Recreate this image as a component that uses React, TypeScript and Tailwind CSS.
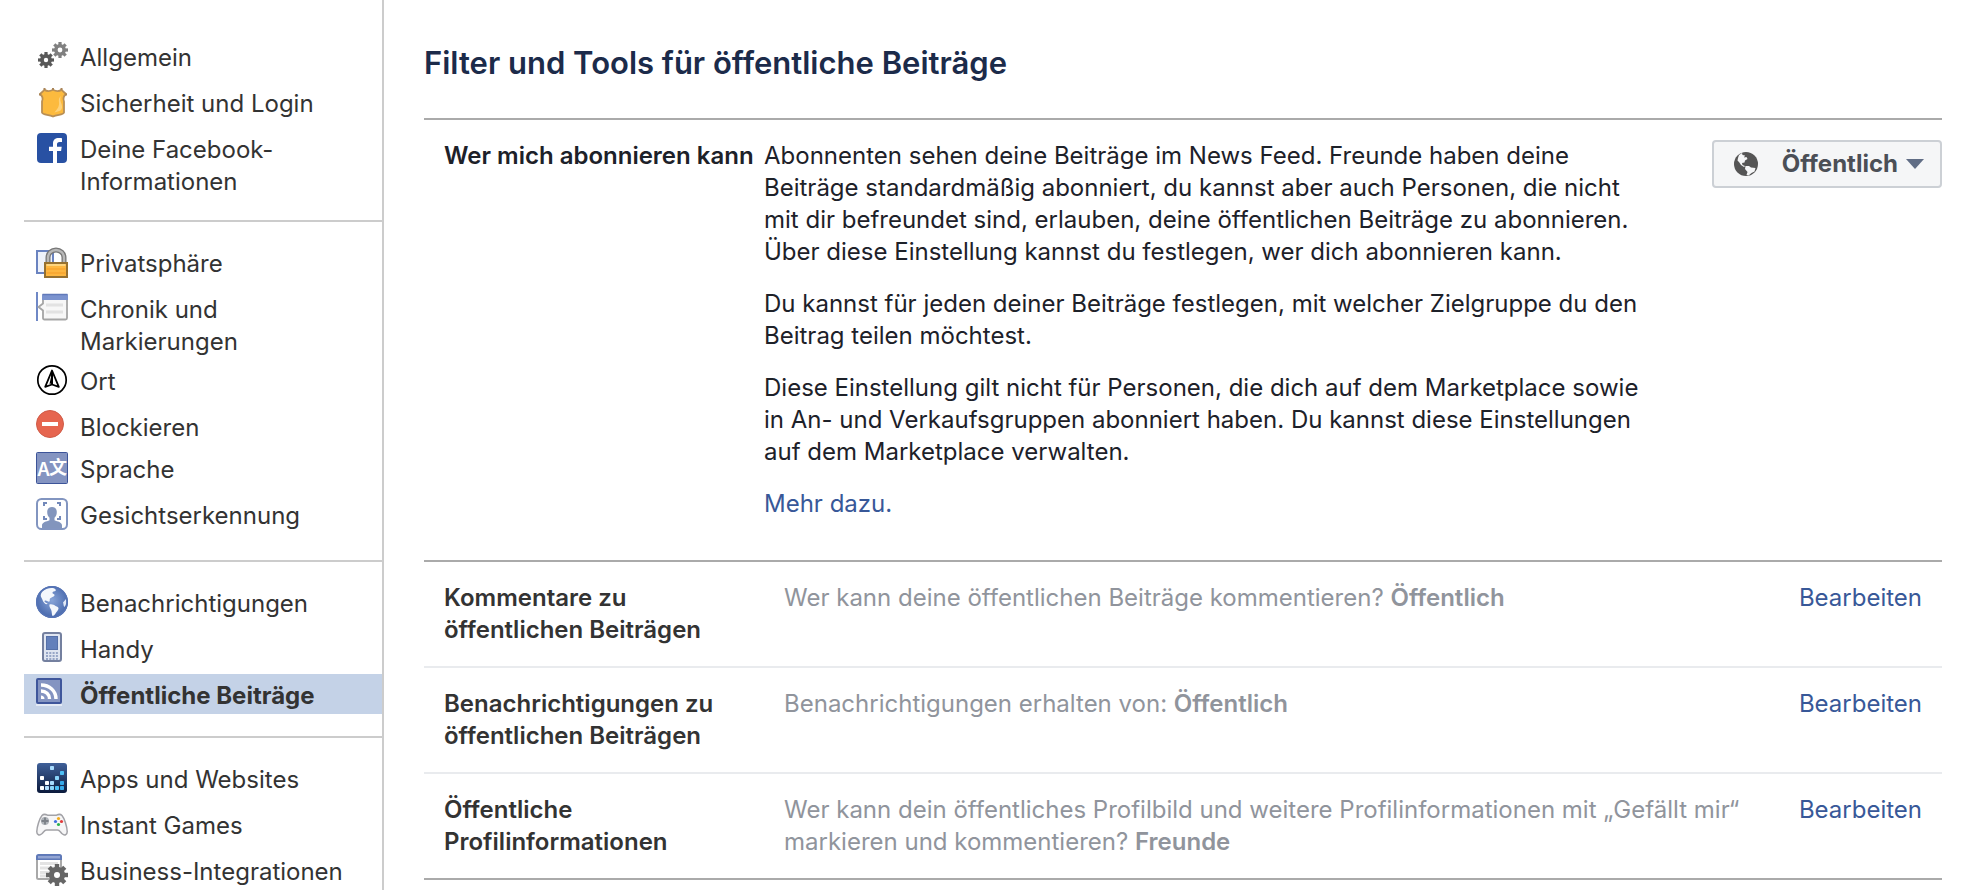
import { useId } from "react";
import type { ReactNode } from "react";
import clsx from "clsx";

type GearProps = {
  cx: number;
  cy: number;
  size: number;
  color: string;
  hole: number;
};

function Gear({ cx, cy, size, color, hole }: GearProps) {
  return (
    <g transform={`translate(${cx} ${cy})`}>
      {[0, 45, 90, 135].map((angle) => (
        <rect
          key={angle}
          x={-size * 0.2}
          y={-size}
          width={size * 0.4}
          height={size * 2}
          fill={color}
          transform={`rotate(${angle})`}
        />
      ))}
      <circle r={size * 0.74} fill={color} />
      <circle r={hole} fill="#fff" />
    </g>
  );
}

function Icon({ children }: { children: ReactNode }) {
  return (
    <svg
      viewBox="0 0 32 32"
      className="mt-1 size-8 shrink-0"
      aria-hidden="true"
    >
      {children}
    </svg>
  );
}

function GearsIcon() {
  return (
    <Icon>
      <Gear cx={24} cy={10} size={8} color="#808080" hole={2.4} />
      <Gear cx={10} cy={20} size={8} color="#595959" hole={2.2} />
    </Icon>
  );
}

function BadgeIcon() {
  return (
    <Icon>
      <path
        d="M4 8 8.5 3.8Q12 6.500 17 3.800 22 6.500 25.500 3.800L30 8C27 10.500 26.800 12.500 28 15.500V26.500C27 29.500 21 28 17 30.500 13 28 7 29.500 6 26.500V15.500C7.400 12.500 7 10.500 4 8Z"
        fill="#fcba3e"
        stroke="#b98f55"
        strokeWidth="1.8"
        strokeLinejoin="round"
      />
      <path
        d="M25 10c-1.500 3-.5 5 .5 8 1 3 .8 5-1 6.500-1.500 1-4 1-6 2 2.500-3 5-6 4.500-10-.2-2.500-.5-4.500 2-6.500Z"
        fill="#fdd27c"
      />
      <path
        d="M8.500 2v2M17 2v2M25.500 2v2M3 8.500h2M29 8.500h2"
        stroke="#a98458"
        strokeWidth="2"
      />
    </Icon>
  );
}

function FacebookIcon() {
  return (
    <Icon>
      <rect x="1" y="1" width="30" height="30" rx="4" fill="#2851a3" />
      <path
        d="M17 31V19h-4v-4.300h4v-3.200C17 7.800 19.300 6 22.800 6c1.300 0 2.500.1 3.200.2V10h-2.300C21.600 10 21 11 21 12.500v2.200h4.700L25.100 19H21v12Z"
        fill="#fff"
      />
    </Icon>
  );
}

function LockIcon() {
  return (
    <Icon>
      <rect x="1" y="5" width="16" height="22" fill="#eef2fa" stroke="#6a83c0" strokeWidth="2" />
      <path d="M12 17v-5.500a8 7.500 0 0 1 16 0V17" fill="none" stroke="#777" strokeWidth="5" />
      <path d="M12 17v-5.500a8 7.500 0 0 1 16 0V17" fill="none" stroke="#b9b9b9" strokeWidth="2.4" />
      <rect x="9" y="17" width="22" height="14" fill="#fdb640" stroke="#96702f" strokeWidth="2" />
      <path d="M10.500 19h19" stroke="#fdd57f" strokeWidth="2" />
      <path d="M10.500 23h19M10.500 27h19" stroke="#f7a52f" strokeWidth="1.5" />
    </Icon>
  );
}

function TimelineIcon() {
  return (
    <Icon>
      <path d="M1 0v29" stroke="#6f88c6" strokeWidth="2" />
      <path
        d="M7 3.500h24v22.500q0 1.500-1.500 1.500h-21Q7 27.500 7 26v-7.500L2.500 15 7 11.500Z"
        fill="#f7f7f7"
        stroke="#a5a5a5"
        strokeWidth="1.8"
      />
      <path d="M6 8V3.500Q6 2 7.500 2h23Q32 2 32 3.500V8Z" fill="#7b93cf" />
      <path d="M6.500 2.500h25" stroke="#6079ba" strokeWidth="1.5" />
      <path d="M10 13h17M10 20h17" stroke="#e2e2e2" strokeWidth="3" />
    </Icon>
  );
}

function LocationIcon() {
  return (
    <Icon>
      <circle cx="16" cy="16" r="14.2" fill="#fff" stroke="#000" strokeWidth="1.7" />
      <path
        d="M16 6.500 22.800 22.800 16 20.500 9.200 22.800Z"
        fill="#fff"
        stroke="#000"
        strokeWidth="1.8"
        strokeLinejoin="round"
      />
      <path d="M16 7v13.500" stroke="#000" strokeWidth="2" />
      <path d="M16 8.500 13.500 20l2.500-.8Z" fill="#000" />
    </Icon>
  );
}

function BlockIcon() {
  return (
    <Icon>
      <circle cx="14" cy="14" r="13.5" fill="#e6654f" stroke="#cf5b47" />
      <rect x="6" y="12" width="16" height="4" fill="#fff" />
    </Icon>
  );
}

function LanguageIcon() {
  return (
    <Icon>
      <rect x=".5" y=".5" width="31" height="31" rx="1" fill="#8494c1" stroke="#3c5499" />
      <text
        x="1"
        y="24"
        fill="#fff"
        fontSize="18"
        fontWeight="600"
        fontFamily="Inter, sans-serif"
      >
        A
      </text>
      <text
        x="13"
        y="22"
        fill="#fff"
        fontSize="18"
        fontWeight="700"
        fontFamily="'Noto Sans CJK SC', sans-serif"
      >
        文
      </text>
    </Icon>
  );
}

function FaceIcon() {
  return (
    <Icon>
      <rect x="1" y="1" width="30" height="30" rx="4.5" fill="#fff" stroke="#8295c0" strokeWidth="2" />
      <path
        d="M8 8V5h3M21 5h3v3M8 18v3h3M21 21h3v-3"
        fill="none"
        stroke="#7389ba"
        strokeWidth="2"
      />
      <path
        d="M16 9c3.200 0 4.800 2.200 4.800 5 0 2.800-1 4.700-2.300 5.800v2.400c3 1.300 7.500 1.800 7.500 5.300V30H6v-2.500c0-3.500 4.500-4 7.500-5.300v-2.400c-1.300-1.100-2.300-3-2.300-5.800 0-2.800 1.600-5 4.800-5Z"
        fill="#8295bd"
      />
    </Icon>
  );
}

function GlobeIcon() {
  const id = useId();
  return (
    <Icon>
      <radialGradient id={id} cx="50%" cy="45%" r="55%">
        <stop offset="0" stopColor="#88a4d8" />
        <stop offset="1" stopColor="#4667ab" />
      </radialGradient>
      <circle cx="16" cy="16" r="16" fill={`url(#${id})`} />
      <path
        d="M7 5c3-2.500 6.500-3.500 10-3 2 .5 3.500 1.500 2.500 3-1 .8-2.500 0-3 1.500-.3 1.500 2.500 1.500 2 3-1 1.800-3 1.500-4.500 3-.8 1.200.5 2-.8 3.200-2-.4-3.200-2-4.500-1-.8 1.500 1.500 1.800 3 3l-1.500.5C7 17 6.500 13 5 11c-.8-2 .3-4.500 2-6Z"
        fill="#f4f7fc"
      />
      <path
        d="M13.500 18.500c2-.8 4.500.2 6 1.500 1.800.8 3.200 1 3 2.800-.5 2-2 3-3 4.700-.8 1.500-2 2.500-3 2.500-1-2-.5-4.500-1.500-6.500-1-1.600-2-3.200-1.500-5Z"
        fill="#f4f7fc"
      />
      <path
        d="M30 13c.6 3 .3 6-1.500 8-1.300-1-.7-3-1.500-4.500Z"
        fill="#e3eaf6"
      />
      <circle cx="16" cy="16" r="15.2" fill="none" stroke="#5674b5" strokeWidth="1.5" />
    </Icon>
  );
}

function PhoneIcon() {
  return (
    <Icon>
      <rect x="7" y="1" width="18" height="28" rx="2" fill="#dfe5f1" stroke="#74809f" strokeWidth="2" />
      <rect x="10.5" y="4.5" width="11" height="13" fill="#6380bb" stroke="#5570a8" />
      <path
        d="M10 21h12M10 24h12M10 27h12"
        stroke="#97a6c7"
        strokeWidth="2"
        strokeDasharray="2 1.3"
      />
    </Icon>
  );
}

function FeedIcon() {
  return (
    <Icon>
      <rect x="0" y="26" width="26" height="2" fill="#e4eaf4" />
      <rect x="1" y="1" width="24" height="24" rx="1" fill="#8494c1" stroke="#3f569b" strokeWidth="2" />
      <path
        d="M5 7c8.500 0 15 6 15 14M5 13c5 0 8.500 3.500 8.500 8"
        fill="none"
        stroke="#fff"
        strokeWidth="3.4"
      />
      <path d="M5 17.500c2 0 3.500 1.500 3.500 3.500H5Z" fill="#fff" />
    </Icon>
  );
}

const appDots = [
  { x: 14, y: 4, color: "#a8dcff" },
  { x: 24, y: 9, color: "#4dc0f7" },
  { x: 4, y: 14, color: "#ffffff" },
  { x: 19, y: 14, color: "#8ad4fb" },
  { x: 9, y: 19, color: "#ffffff" },
  { x: 14, y: 19, color: "#a8dcff" },
  { x: 24, y: 19, color: "#36a9ea" },
  { x: 4, y: 24, color: "#ffffff" },
  { x: 9, y: 24, color: "#b3e0ff" },
  { x: 14, y: 24, color: "#8ad4fb" },
  { x: 19, y: 24, color: "#4dc0f7" },
  { x: 24, y: 24, color: "#36a9ea" },
];

function AppsIcon() {
  const id = useId();
  return (
    <Icon>
      <linearGradient id={id} x1="0" y1="0" x2="0" y2="1">
        <stop offset="0" stopColor="#3f6099" />
        <stop offset="1" stopColor="#0b1a3c" />
      </linearGradient>
      <rect x="1" y="1" width="30" height="30" rx="3" fill={`url(#${id})`} />
      {appDots.map((dot) => (
        <rect
          key={`${dot.x}-${dot.y}`}
          x={dot.x}
          y={dot.y}
          width="4"
          height="4"
          rx=".8"
          fill={dot.color}
        />
      ))}
    </Icon>
  );
}

function GamepadIcon() {
  return (
    <Icon>
      <path
        d="M6 7.500C7.500 6 10 6.400 11.500 7.200h9C22 6.400 24.500 6 26 7.500c2.500 3 5 11 5.200 16 .1 3.500-2.700 4.500-5 2.300-2-2-2.700-3.800-4.700-3.800h-11c-2 0-2.700 1.800-4.700 3.800-2.300 2.200-5.100 1.200-5-2.300C1 18.500 3.500 10.500 6 7.500Z"
        fill="#f6f6f7"
        stroke="#a2a2a7"
        strokeWidth="1.5"
      />
      <circle cx="9" cy="13" r="4" fill="#aeb2b8" />
      <path d="M9 9.500v7M5.500 13h7" stroke="#7b8087" strokeWidth="1.8" />
      <circle cx="22.5" cy="10.5" r="1.6" fill="#f4ad1c" />
      <circle cx="19.5" cy="13.5" r="1.6" fill="#3f6fe0" />
      <circle cx="25.5" cy="13.5" r="1.6" fill="#e23b3b" />
      <circle cx="22.5" cy="16.5" r="1.6" fill="#2bb24c" />
    </Icon>
  );
}

function BusinessIcon() {
  return (
    <Icon>
      <rect x="1" y="2" width="24" height="23" rx="1.5" fill="#fff" stroke="#a9a9a9" strokeWidth="2" />
      <path d="M0 6V2.500Q0 0 2.500 0h21Q26 0 26 2.500V6Z" fill="#5f79b8" />
      <path d="M2 3.200h22" stroke="#93a5d3" strokeWidth="2.5" />
      <path d="M4 9.500h18M4 14h18M4 18.500h12M4 22h8" stroke="#e3e3e3" strokeWidth="3" />
      <Gear cx={21} cy={21} size={11} color="#666" hole={3} />
    </Icon>
  );
}

const sections = [
  {
    className: "pt-9 pb-3.5",
    items: [
      { label: "Allgemein", icon: <GearsIcon /> },
      { label: "Sicherheit und Login", icon: <BadgeIcon /> },
      { label: "Deine Facebook-Informationen", icon: <FacebookIcon /> },
    ],
  },
  {
    className: "border-t-2 pt-5 pb-5",
    items: [
      { label: "Privatsphäre", icon: <LockIcon /> },
      { label: "Chronik und Markierungen", icon: <TimelineIcon />, gap: "mb-0" },
      { label: "Ort", icon: <LocationIcon /> },
      { label: "Blockieren", icon: <BlockIcon />, gap: "mb-0.5" },
      { label: "Sprache", icon: <LanguageIcon /> },
      { label: "Gesichtserkennung", icon: <FaceIcon /> },
    ],
  },
  {
    className: "border-t-2 pt-5 pb-4",
    items: [
      { label: "Benachrichtigungen", icon: <GlobeIcon /> },
      { label: "Handy", icon: <PhoneIcon /> },
      { label: "Öffentliche Beiträge", icon: <FeedIcon />, active: true },
    ],
  },
  {
    className: "border-t-2 pt-5",
    items: [
      { label: "Apps und Websites", icon: <AppsIcon /> },
      { label: "Instant Games", icon: <GamepadIcon /> },
      { label: "Business-Integrationen", icon: <BusinessIcon />, gap: "mb-0" },
    ],
  },
];

const settings = [
  {
    label: "Kommentare zu öffentlichen Beiträgen",
    text: "Wer kann deine öffentlichen Beiträge kommentieren?",
    value: "Öffentlich",
  },
  {
    label: "Benachrichtigungen zu öffentlichen Beiträgen",
    text: "Benachrichtigungen erhalten von:",
    value: "Öffentlich",
  },
  {
    label: "Öffentliche Profilinformationen",
    text: "Wer kann dein öffentliches Profilbild und weitere Profilinformationen mit „Gefällt mir“ markieren und kommentieren?",
    value: "Freunde",
  },
];

function Sidebar() {
  return (
    <nav className="w-96 shrink-0 border-r-2 border-[#ccc] pl-6 text-[#333]">
      {sections.map((section, index) => (
        <ul key={index} className={clsx("border-[#ccc]", section.className)}>
          {section.items.map((item) => (
            <li key={item.label} className={item.gap ?? "mb-1.5"}>
              <a
                href="#"
                className={clsx(
                  "flex gap-3 pr-4 pl-3",
                  item.active && "bg-[#c4d2e7] font-bold"
                )}
              >
                {item.icon}
                <span className="pt-1.5 pb-0.5">{item.label}</span>
              </a>
            </li>
          ))}
        </ul>
      ))}
    </nav>
  );
}

function AudienceButton() {
  return (
    <button
      type="button"
      className="flex h-12 shrink-0 items-center rounded border-2 border-[#ccd0d5] bg-[#f5f6f7] pr-4 pl-5 font-bold text-[#4b4f56]"
    >
      <svg viewBox="0 0 24 24" className="mr-6 size-6" aria-hidden="true">
        <circle cx="12" cy="12" r="12" fill="#555" />
        <path
          d="M5 3 8 1 8.500 3 11 3.500 10 5.500 12.500 5 13.500 7 11 8.500 10.500 10.500 8 11 8.500 13 11 14 10 15 7 13 5 10 3.500 8.500 4 6Z"
          fill="#f5f6f7"
        />
        <path
          d="M11.500 14 15 14 17 15.500 21.500 16 20.500 19.500 17.500 21 14.500 23.500 12.500 23 13.500 20 11 17Z"
          fill="#f5f6f7"
        />
      </svg>
      Öffentlich
      <svg viewBox="0 0 18 10" className="ml-2 h-2.5 w-4.5" aria-hidden="true">
        <path d="M0 0h18L9 10Z" fill="#606d85" />
      </svg>
    </button>
  );
}

export default function App() {
  return (
    <div className="flex min-h-screen bg-white font-['Inter','Liberation_Sans',sans-serif] text-2xl leading-8">
      <Sidebar />
      <main className="min-w-0 flex-1 pr-8 pl-10">
        <h1 className="pt-11 pb-9 text-[31px] leading-[38px] font-semibold text-[#1c2b4a]">
          Filter und Tools für öffentliche Beiträge
        </h1>

        <section className="flex border-y-2 border-[#aaa] pt-5 pb-10 pl-5 text-[#1d2129]">
          <h2 className="w-80 shrink-0 font-semibold whitespace-nowrap">
            Wer mich abonnieren kann
          </h2>
          <div className="mr-auto max-w-[888px] space-y-5">
            <p>
              Abonnenten sehen deine Beiträge im News Feed. Freunde haben deine
              Beiträge standardmäßig abonniert, du kannst aber auch Personen,
              die nicht mit dir befreundet sind, erlauben, deine öffentlichen
              Beiträge zu abonnieren. Über diese Einstellung kannst du
              festlegen, wer dich abonnieren kann.
            </p>
            <p>
              Du kannst für jeden deiner Beiträge festlegen, mit welcher
              Zielgruppe du den Beitrag teilen möchtest.
            </p>
            <p>
              Diese Einstellung gilt nicht für Personen, die dich auf dem
              Marketplace sowie in An- und Verkaufsgruppen abonniert haben. Du
              kannst diese Einstellungen auf dem Marketplace verwalten.
            </p>
            <p>
              <a href="#" className="text-[#385898]">
                Mehr dazu.
              </a>
            </p>
          </div>
          <div className="shrink-0">
            <AudienceButton />
          </div>
        </section>

        <ul className="divide-y-2 divide-[#e9ebee] border-b-2 border-[#aaa]">
          {settings.map((setting) => (
            <li key={setting.label} className="flex px-5 py-5">
              <h3 className="w-[340px] shrink-0 pr-10 font-semibold text-[#333]">
                {setting.label}
              </h3>
              <p className="flex-1 pr-10 text-[#90949c]">
                {setting.text}{" "}
                <strong className="font-semibold">{setting.value}</strong>
              </p>
              <a href="#" className="text-[#385898]">
                Bearbeiten
              </a>
            </li>
          ))}
        </ul>
      </main>
    </div>
  );
}
